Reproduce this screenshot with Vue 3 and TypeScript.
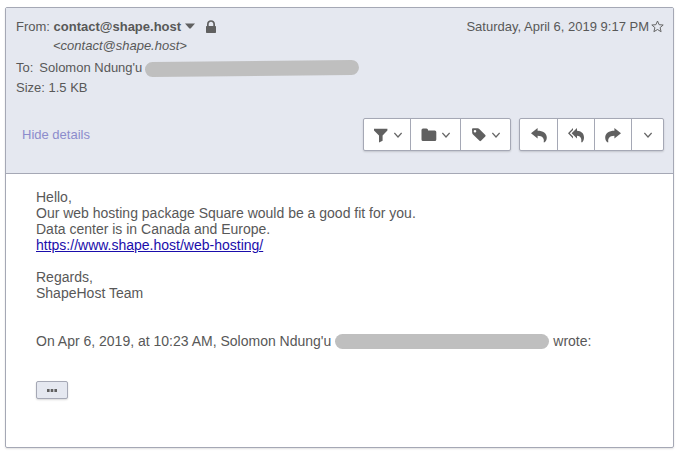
<script setup lang="ts">
import { ref } from 'vue'

interface Action {
  id: string
  label: string
  path: string
}

const menuActions: Action[] = [
  {
    id: 'filter',
    label: 'Filter messages',
    path: 'M1 1.8H14.4V3.6L9.6 8.6V13.8L6 15.6V8.6L1 3.6Z',
  },
  {
    id: 'move',
    label: 'Move to folder',
    path: 'M.5 3Q.5 1.5 2 1.5H5.5Q7 1.5 7 3V3.5H13.8Q15.3 3.5 15.3 5V12.5Q15.3 14 13.8 14H2Q.5 14 .5 12.5Z',
  },
  {
    id: 'tag',
    label: 'Tag message',
    path: 'M1 2.3Q1 1.3 2 1.3H6.8Q7.6 1.3 8.3 2L14.3 8Q15 8.8 14.3 9.5L10 13.8Q9.2 14.5 8.5 13.8L2 7.6Q1.3 6.9 1.2 6ZM4 2.9A1.3 1.3 0 1 0 4 5.5A1.3 1.3 0 1 0 4 2.9Z',
  },
]

const replyActions: Action[] = [
  {
    id: 'reply',
    label: 'Reply',
    path: 'M0 6.2L6.6 1V3.8C12 3.8 15.8 6.2 15.8 10.6C15.8 12.6 15 14.2 13.8 15.3H12.6C13.6 11.6 11.6 8.7 6.6 8.7V11.4Z',
  },
  {
    id: 'reply-all',
    label: 'Reply to all',
    path: 'M3.6 6.2L9 1V3.8C13.3 4 16 6.4 16 10.6C16 12.6 15.3 14.2 14.3 15.3H13.2C13.9 11.6 12.7 8.9 9 8.7V11.4ZM0 6.2L5 1V2.9L1.8 6.2L5 9.5V11.4Z',
  },
  {
    id: 'forward',
    label: 'Forward',
    path: 'M16 6.2L9.4 1V3.8C4 3.8.2 6.2.2 10.6C.2 12.6 1 14.2 2.2 15.3H3.4C2.4 11.6 4.4 8.7 9.4 8.7V11.4Z',
  },
]

const detailsShown = ref(true)
const starred = ref(false)
</script>

<template>
  <article class="message">
    <header class="head">
      <div class="summary">
        <div class="sender">
          <span>From: <b>contact@shape.host</b></span>
          <button class="plain caret" type="button" aria-label="Sender options">
            <svg width="10" height="6" viewBox="0 0 10 6"><path d="M0 .5H10L5.6 5.5H4.4Z" /></svg>
          </button>
          <svg class="lock" width="12" height="13" viewBox="0 0 12 13" role="img" aria-label="Secure">
            <path fill-rule="evenodd" d="M2 6V4.2C2 1.7 3.7.2 6 .2S10 1.7 10 4.2V6H10.3Q11 6 11 6.7V12.2Q11 13 10.3 13H1.7Q1 13 1 12.2V6.7Q1 6 1.7 6ZM3.7 6H8.3V4.2C8.3 2.7 7.4 1.8 6 1.8S3.7 2.7 3.7 4.2Z" />
          </svg>
        </div>
        <div class="date">
          <time datetime="2019-04-06T21:17">Saturday, April 6, 2019 9:17 PM</time>
          <button class="plain" type="button" aria-label="Star message" :aria-pressed="starred" @click="starred = !starred">
            <svg width="13" height="13" viewBox="0 0 13 13">
              <path class="star" :class="{ on: starred }" d="M6.5 1L8.1 4.7L12.2 5L9.1 7.6L10.1 11.7L6.5 9.5L2.9 11.7L3.9 7.6L.8 5L4.9 4.7Z" />
            </svg>
          </button>
        </div>
      </div>

      <div v-show="detailsShown" class="details">
        <i class="address">&lt;contact@shape.host&gt;</i>
        <div class="recipient">
          <span>To:</span>
          <span>Solomon Ndung'u</span>
          <span class="redacted tilted"></span>
        </div>
        <div class="size">Size: 1.5 KB</div>
      </div>

      <div class="toolbar">
        <button class="plain toggle" type="button" @click="detailsShown = !detailsShown">
          {{ detailsShown ? 'Hide details' : 'Show details' }}
        </button>
        <div class="group menus">
          <button v-for="a in menuActions" :key="a.id" type="button" :aria-label="a.label">
            <svg width="16" height="16" viewBox="0 0 16 16"><path fill-rule="evenodd" :d="a.path" /></svg>
            <svg width="8" height="6" viewBox="0 0 8 6"><path class="chevron" d="M.4 1L4 5L7.6 1" /></svg>
          </button>
        </div>
        <div class="group replies">
          <button v-for="a in replyActions" :key="a.id" type="button" :aria-label="a.label">
            <svg width="16" height="16" viewBox="0 0 16 16"><path :d="a.path" /></svg>
          </button>
          <button class="more" type="button" aria-label="More actions">
            <svg width="8" height="6" viewBox="0 0 8 6"><path class="chevron" d="M.4 1L4 5L7.6 1" /></svg>
          </button>
        </div>
      </div>
    </header>

    <section class="body">
      <p>
        Hello,<br />
        Our web hosting package Square would be a good fit for you.<br />
        Data center is in Canada and Europe.<br />
        <a href="https://www.shape.host/web-hosting/">https://www.shape.host/web-hosting/</a>
      </p>
      <p>
        Regards,<br />
        ShapeHost Team
      </p>
      <p class="quote">
        <span>On Apr 6, 2019, at 10:23 AM, Solomon Ndung'u</span>
        <span class="redacted"></span>
        <span>wrote:</span>
      </p>
      <button class="expand" type="button" aria-label="Show quoted text">
        <svg width="10" height="3" viewBox="0 0 10 3"><path d="M0 0H2.6V3H0ZM3.7 0H6.3V3H3.7ZM7.4 0H10V3H7.4Z" /></svg>
      </button>
    </section>
  </article>
</template>

<style>
body {
  background: #fff;
}
</style>

<style scoped>
.message {
  box-sizing: border-box;
  margin: 7px 5px 5px;
  border: 1px solid #a5a8b5;
  border-radius: 2px;
  box-shadow: 0 1px 2px #0000001f;
  font: 13px/20px "Liberation Sans", Arial, sans-serif;
  color: #585858;
}

svg {
  display: block;
  flex: none;
  fill: #606060;
}

button {
  font: inherit;
  color: inherit;
  cursor: pointer;
}

.plain {
  padding: 0;
  border: 0;
  background: none;
}

.head {
  padding: 9px 9px 22px 10px;
  border-bottom: 1px solid #a5a8b5;
  background: #e5e8f0;
}

.summary,
.sender,
.date,
.recipient,
.toolbar,
.quote {
  display: flex;
  align-items: center;
}

.summary {
  justify-content: space-between;
}

.sender svg {
  padding-bottom: 2px;
}

.caret {
  margin: 0 10px 0 4px;
}

.date {
  gap: 2px;
}

.date svg {
  padding-bottom: 2px;
}

.star {
  fill: none;
  stroke: #666;
}

.star.on {
  fill: #666;
}

.address {
  display: block;
  margin-left: 37px;
  line-height: 18px;
}

.recipient {
  gap: 6px;
  padding-top: 2px;
  line-height: 22px;
}

.redacted {
  width: 214px;
  height: 15px;
  border-radius: 8px;
  background: #bfbfbf;
}

.tilted {
  transform: rotate(-0.6deg);
}

.recipient .redacted {
  margin-left: -3px;
}

.size {
  line-height: 18px;
}

.toolbar {
  gap: 8px;
  margin-top: 21px;
}

.toggle {
  margin: 0 auto 0 6px;
  color: #8c8ccc;
}

.group {
  display: flex;
  border: 1px solid #a5a8b5;
  border-radius: 2px;
  background: #fff;
  box-shadow: 0 1px 2px #00000026;
}

.group button {
  display: flex;
  align-items: center;
  justify-content: center;
  gap: 5px;
  box-sizing: border-box;
  width: 37px;
  height: 31px;
  padding: 0;
  border: 0;
  background: none;
}

.group button + button {
  border-left: 1px solid #a5a8b5;
}

.menus button {
  width: 50px;
}

.menus button:first-child {
  width: 46px;
}

.group .more {
  width: 32px;
}

.chevron {
  fill: none;
  stroke: #666;
  stroke-width: 1.2;
}

.body {
  padding: 15px 30px 48px;
  font-size: 14px;
  line-height: 16px;
}

.body p {
  margin: 0 0 16px;
}

.body a {
  color: #1a0dab;
}

.body .quote {
  gap: 4px;
  margin: 32px 0;
}

.expand {
  display: flex;
  align-items: center;
  justify-content: center;
  box-sizing: border-box;
  width: 32px;
  height: 18px;
  padding: 0;
  border: 1px solid #a5a8b5;
  border-radius: 2px;
  background: #e5e8f0;
  box-shadow: 0 1px 2px #00000026;
}
</style>
